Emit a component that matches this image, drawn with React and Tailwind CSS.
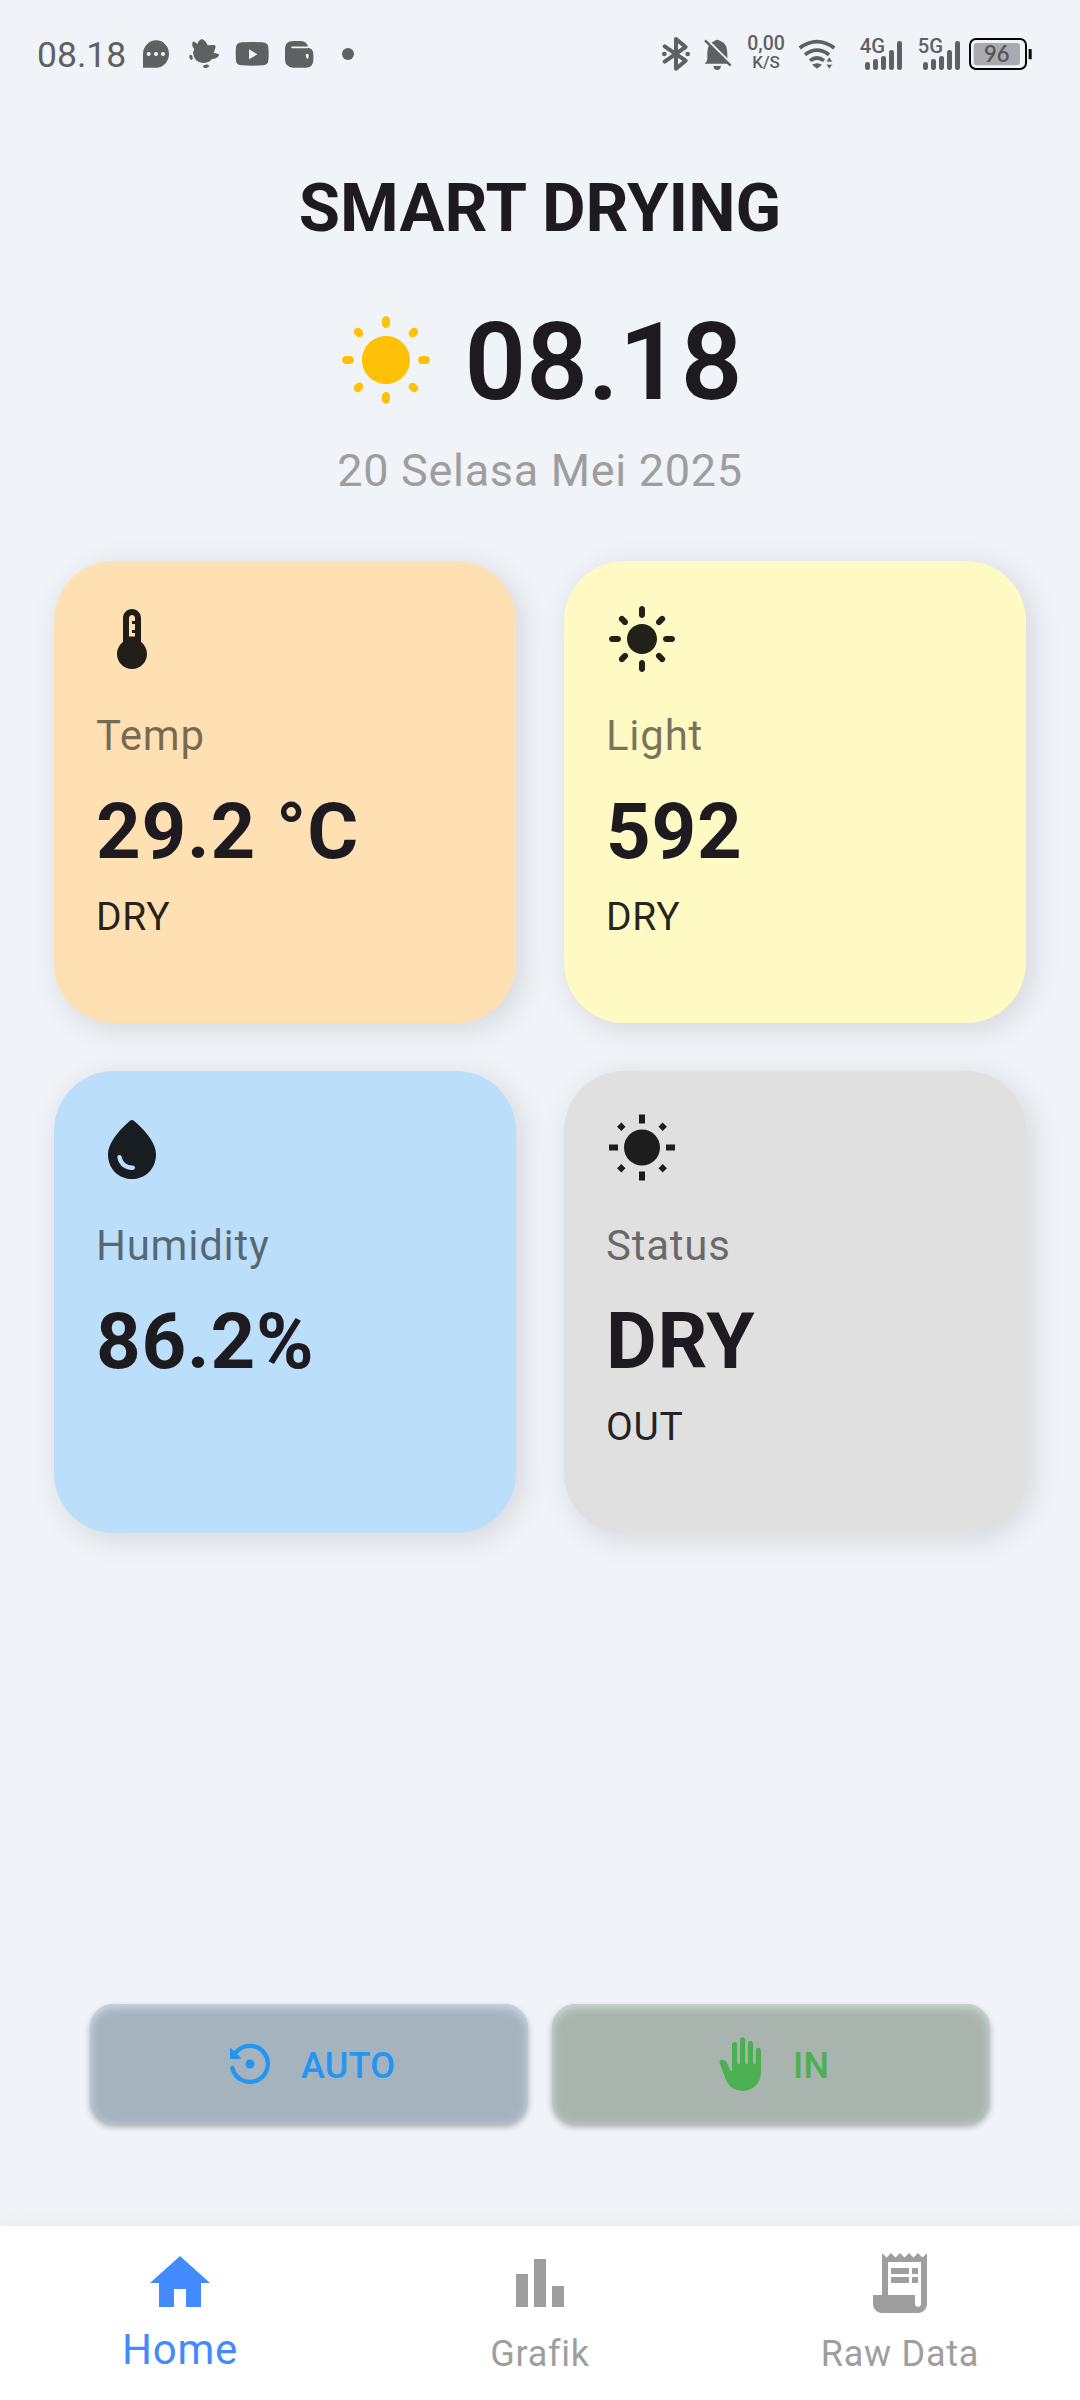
import React from "react";
import {
  MdBarChart,
  MdHome,
  MdLightMode,
} from "react-icons/md";

/* ---------- status bar ---------- */

function Glyph({ x, w, className = "", children }) {
  return (
    <svg
      viewBox={`${x} 0 ${w} 210`}
      width={w / 3}
      height="70"
      className={`shrink-0 ${className}`}
      fill="#5f6062"
    >
      {children}
    </svg>
  );
}

function Signal({ label }) {
  return (
    <Glyph x={654} w={138}>
      <text x="659" y="100" fontFamily="Roboto" fontWeight="500" fontSize="62" textLength="76" lengthAdjust="spacingAndGlyphs">
        {label}
      </text>
      <rect x="675" y="126" width="15" height="24" rx="7" />
      <rect x="699" y="117" width="15" height="33" rx="7" />
      <rect x="723" y="108" width="15" height="42" rx="7" />
      <rect x="747" y="90" width="15" height="60" rx="7" />
      <rect x="771" y="63" width="15" height="87" rx="7" />
    </Glyph>
  );
}

function StatusBar() {
  return (
    <div className="mt-5 flex h-[70px] w-[1060px] shrink-0 items-start pl-9 text-[#5f6062]">
      <span className="mt-[14px] w-[100px] pl-px text-[35.5px] leading-[43px]">08.18</span>
      {/* chat bubble */}
      <Glyph x={408} w={120}>
        <path d="M429 143V101a39 41 0 1 1 39 42Z" />
        <circle cx="446" cy="102" r="6" fill="#f0f4f8" />
        <circle cx="468" cy="102" r="6" fill="#f0f4f8" />
        <circle cx="489" cy="102" r="6" fill="#f0f4f8" />
      </Glyph>
      {/* bird */}
      <Glyph x={528} w={150}>
        <path d="M577 70q0-7 6-5q7 3 9 8q3-12 14-16q12 5 17 19l18-1q8 1 5 10l-5 13l14 4q4 2 1 6q-7 9-20 9q-9 12-27 12q-27-2-30-30q2-9 4-12q-8-7-6-17Z" />
        <ellipse cx="573" cy="112" rx="5" ry="8" transform="rotate(-18 573 112)" />
        <ellipse cx="618" cy="139" rx="9" ry="5" transform="rotate(-10 618 139)" />
      </Glyph>
      {/* video */}
      <Glyph x={678} w={150}>
        <path d="M726 67q31-2 61 0q17 1 18 15q2 20 0 40q-1 13-18 14q-31 2-61 0q-17-1-18-14q-2-20 0-40q1-14 18-15Z" />
        <path d="M747 88v30l25-15Z" fill="#f0f4f8" />
      </Glyph>
      {/* wallet */}
      <Glyph x={828} w={150}>
        <path d="M880 63h22q20 0 22 20q16 3 16 19v18q0 23-24 23h-36q-25 0-25-25V88q0-25 25-25Z" />
        <path d="M876 82h47" stroke="#f0f4f8" strokeWidth="5" strokeLinecap="round" />
        <path d="M917 104q5-5 9 0v5q-1 8-4 8t-4-8Z" fill="#f0f4f8" />
      </Glyph>
      <Glyph x={978} w={120}>
        <circle cx="1044" cy="102" r="18" />
      </Glyph>

      {/* bluetooth */}
      <Glyph x={54} w={108} className="ml-auto">
        <path d="M74 79l63 43l-29 24V57l29 24L74 125" fill="none" stroke="#5f6062" strokeWidth="12" strokeLinejoin="round" strokeLinecap="round" />
        <circle cx="73" cy="102" r="7" />
        <circle cx="143" cy="102" r="7" />
      </Glyph>
      {/* muted bell */}
      <Glyph x={162} w={138}>
        <path d="M194 131q8-6 8-14V98q0-27 20-34q10-9 20 0q20 7 20 34v19q0 8 8 14Z" />
        <path d="M220 138h23q-2 13-12 12q-9 0-11-12Z" />
        <path d="M198 57l78 78" stroke="#f0f4f8" strokeWidth="9" />
        <path d="M195 61l77 76" stroke="#5f6062" strokeWidth="7" />
      </Glyph>
      <div className="mt-[14px] flex w-[52px] flex-col items-center font-medium">
        <span className="text-[19.5px] leading-[19px]">0,00</span>
        <span className="text-[17px] leading-[19px]">K/S</span>
      </div>
      {/* wifi */}
      <Glyph x={456} w={198}>
        <g fill="none" stroke="#5f6062" strokeWidth="11">
          <path d="M479 84q52-38 104 0" />
          <path d="M495 104q36-27 72 0" />
          <path d="M510 122q21-16 42 0" />
        </g>
        <path d="M516 134q15-9 30 0l-15 12Z" />
        <path d="M568 110l10 16h-20ZM568 148l10-15h-20Z" stroke="#f0f4f8" strokeWidth="2" />
      </Glyph>
      <Signal label="4G" />
      <Glyph x={792} w={36} />
      <Signal label="5G" />
      {/* battery */}
      <Glyph x={966} w={294}>
        <rect x="990" y="57" width="168" height="90" rx="18" fill="none" stroke="#050505" strokeWidth="6" />
        <rect x="1001" y="69" width="139" height="67" rx="9" fill="#a9abae" />
        <rect x="1166" y="87" width="9" height="31" rx="2" fill="#050505" />
        <text x="1070" y="126" textAnchor="middle" fontFamily="Lato" fontWeight="600" fontSize="66" fill="#55565a">
          96
        </text>
      </Glyph>
    </div>
  );
}

/* ---------- icons ---------- */

function SunRounded({ className }) {
  return (
    <svg viewBox="0 0 24 24" className={className} fill="currentColor">
      <path d="M6.05 4.14l-.39-.39c-.39-.39-1.02-.38-1.4 0l-.01.01c-.39.39-.39 1.02 0 1.4l.38.39c.39.39 1.01.39 1.4 0l.01-.01c.39-.38.39-1.02.01-1.4zM3.01 10.5H1.99c-.55 0-.99.44-.99.99v.01c0 .55.44.99.99.99H3c.56.01 1-.43 1-.98v-.01c0-.56-.44-1-.99-1zm9-9.95H12c-.56 0-1 .44-1 .99v.96c0 .55.44.99.99.99H12c.56.01 1-.43 1-.98v-.97c0-.55-.44-.99-.99-.99zm7.74 3.21c-.39-.39-1.02-.39-1.41-.01l-.39.39c-.39.39-.39 1.02 0 1.4l.01.01c.39.39 1.02.39 1.4 0l.39-.39c.39-.39.39-1.01 0-1.4zm-1.81 15.1l.39.39c.39.39 1.02.39 1.41 0 .39-.39.39-1.02 0-1.4l-.39-.39c-.39-.38-1.02-.38-1.4 0-.4.4-.4 1.02-.01 1.4zM20 11.49v.01c0 .55.44.99.99.99H22c.55 0 .99-.44.99-.99v-.01c0-.55-.44-.99-.99-.99h-1.01c-.55 0-.99.44-.99.99zM12 5.5c-3.31 0-6 2.69-6 6s2.69 6 6 6 6-2.69 6-6-2.69-6-6-6zm-.01 16.95H12c.55 0 .99-.44.99-.99v-.96c0-.55-.44-.99-.99-.99h-.01c-.55 0-.99.44-.99.99v.96c0 .55.44.99.99.99zm-7.74-3.21c.39.39 1.02.39 1.41 0l.39-.39c.39-.39.38-1.02 0-1.4l-.01-.01c-.39-.39-1.02-.39-1.41 0l-.39.39c-.38.4-.38 1.02.01 1.41z" />
    </svg>
  );
}

function SunSharp({ className }) {
  return (
    <svg viewBox="0 0 24 24" className={className} fill="currentColor">
      <circle cx="12" cy="11.5" r="6" />
      <g stroke="currentColor" strokeWidth="2">
        <path d="M12 .5v3M12 19.5v3M1 11.5h3M20 11.5h3M4.4 3.9l1.4 1.4M19.6 3.9l-1.4 1.4M4.4 19.1l1.4-1.4M19.6 19.1l-1.4-1.4" />
      </g>
    </svg>
  );
}

function Thermometer({ className }) {
  return (
    <svg viewBox="0 0 24 24" className={className} fill="currentColor">
      <path d="M15 13V5c0-1.66-1.34-3-3-3S9 3.34 9 5v8c-1.21.91-2 2.37-2 4 0 2.76 2.24 5 5 5s5-2.24 5-5c0-1.63-.79-3.09-2-4zm-4-8c0-.55.45-1 1-1s1 .45 1 1v1h-1v1h1v2h-1v1h1v1.2h-2V5z" />
    </svg>
  );
}

function Drop({ className }) {
  return (
    <svg viewBox="0 0 24 24" className={className} fill="currentColor" fillRule="evenodd">
      <path d="M12.66 2.58c-.38-.33-.95-.33-1.33 0C6.45 6.88 4 10.62 4 13.8c0 4.98 3.8 8.2 8 8.2s8-3.22 8-8.2c0-3.18-2.45-6.92-7.34-11.22zM7.83 14c.37 0 .67.26.74.62.41 2.22 2.28 2.98 3.64 2.87.43-.02.79.32.79.75 0 .4-.32.73-.72.75-2.13.13-4.62-1.09-5.19-4.12-.08-.45.28-.87.74-.87z" />
    </svg>
  );
}

function Receipt({ className }) {
  return (
    <svg viewBox="0 0 24 24" className={className} fill="currentColor">
      <path d="M19.5 3.5L18 2l-1.5 1.5L15 2l-1.5 1.5L12 2l-1.5 1.5L9 2 7.5 3.5 6 2v14H3v3c0 1.66 1.34 3 3 3h12c1.66 0 3-1.34 3-3V2l-1.5 1.5zM19 19c0 .55-.45 1-1 1s-1-.45-1-1v-3H8V5h11v14z" />
      <path d="M9 7h6v2H9zM16 7h2v2h-2zM9 10h6v2H9zM16 10h2v2h-2z" />
    </svg>
  );
}

function Restore() {
  return (
    <svg viewBox="471 186 138 132" width="46" height="44" fill="#2196f3" className="shrink-0">
      <path d="M487 264A54 54 0 1 0 499 216" fill="none" stroke="#2196f3" strokeWidth="13" strokeLinecap="round" />
      <path d="M482 206v29h29Z" stroke="#2196f3" strokeWidth="4" strokeLinejoin="round" />
      <circle cx="540" cy="252" r="13.5" />
    </svg>
  );
}

function Hand() {
  return (
    <svg viewBox="567 168 129 168" width="43" height="56" fill="#4caf50" className="shrink-0">
      <path d="M568 246q1-8 10-7q9 1 13 9l9 21q2 4 6 4V193a7.8 7.8 0 0 1 15.5 0v56q0 3 4.2 3t4.2-3V179a7.8 7.8 0 0 1 15.5 0v70q0 3 4.2 3t4.2-3V190a7.8 7.8 0 0 1 15.5 0v59q0 3 4 3t4-3V210a7.8 7.8 0 0 1 15.5 0v68a55 55 0 0 1-55 55q-35 0-50-33Z" />
    </svg>
  );
}

/* ---------- dashboard ---------- */

function Card({ tone, icon: Icon, label, value, note }) {
  return (
    <div
      className={`flex h-[462px] w-[462px] flex-col rounded-[60px] p-[42px] shadow-[6px_6px_30px_rgba(0,0,0,0.12)] ${tone}`}
    >
      <Icon className="h-[72px] w-[72px] text-black/[0.87]" />
      <div className="mt-[31px] text-[42px] leading-[60px] tracking-[0.75px] text-black/[0.54]">{label}</div>
      <div className="mt-[10px] text-[78px] leading-[111px] font-bold tracking-[0.75px] whitespace-pre">{value}</div>
      <div className="mt-[2px] text-[39px] leading-[56px] tracking-[0.75px] text-black/[0.87]">{note}</div>
    </div>
  );
}

function NavItem({ icon: Icon, label, active }) {
  return (
    <div
      className={`flex flex-1 flex-col items-center pt-[21px] tracking-[0.75px] ${active ? "text-[#448aff]" : "text-[#9e9e9e]"}`}
    >
      <Icon className="h-[72px] w-[72px]" />
      <span className={active ? "mt-[6px] text-[42px] leading-[49px]" : "mt-[14px] text-[36px] leading-[42px]"}>
        {label}
      </span>
    </div>
  );
}

export default function App() {
  return (
    <div className="flex h-[2400px] w-[1080px] flex-col overflow-hidden bg-[#f0f4f8] font-['Roboto',sans-serif] text-[#1d1b20]">
      <StatusBar />

      <header className="flex flex-col items-center">
        <h1 className="mt-[78px] text-[67.1px] leading-[80px] font-bold">SMART DRYING</h1>
        <div className="mt-[51px] flex h-[126px] items-center gap-[31px]">
          <SunRounded className="h-24 w-24 text-[#ffc107]" />
          <span className="text-[108px] leading-[126px] font-semibold tracking-[0.1px]">08.18</span>
        </div>
        <p className="mt-[20px] text-[45px] leading-[52px] tracking-[0.7px] text-[#9e9e9e]">20 Selasa Mei 2025</p>
      </header>

      <main className="mt-[64px] grid grid-cols-[462px_462px] gap-12 px-[54px]">
        <Card tone="bg-[#ffe0b2]" icon={Thermometer} label="Temp" value="29.2 °C" note="DRY" />
        <Card tone="bg-[#fff9c4]" icon={MdLightMode} label="Light" value="592" note="DRY" />
        <Card tone="bg-[#bbdefb]" icon={Drop} label="Humidity" value="86.2%" note="" />
        <Card tone="bg-[#e0e0e0]" icon={SunSharp} label="Status" value="DRY" note="OUT" />
      </main>

      <div className="mt-auto mb-[102px] flex shrink-0 gap-6 px-[90px] text-[36px] font-medium">
        <button className="flex h-[120px] w-[438px] items-center rounded-[24px] bg-[#a5b3be] pl-[137px] text-[#2196f3] shadow-[0_3px_6px_rgba(0,0,0,0.3),inset_0_3px_8px_1px_#c8d8e5]">
          <Restore />
          <span className="ml-[28px] pt-1 tracking-[0.2px]">AUTO</span>
        </button>
        <button className="flex h-[120px] w-[438px] items-center rounded-[24px] bg-[#aab4af] pl-[167px] text-[#4caf50] shadow-[0_3px_6px_rgba(0,0,0,0.3),inset_0_3px_8px_1px_#c9d9d1]">
          <Hand />
          <span className="ml-[31px] pt-1 tracking-[0.2px]">IN</span>
        </button>
      </div>

      <nav className="flex h-[174px] shrink-0 bg-white shadow-[0_0_24px_rgba(0,0,0,0.04)]">
        <NavItem icon={MdHome} label="Home" active />
        <NavItem icon={MdBarChart} label="Grafik" />
        <NavItem icon={Receipt} label="Raw Data" />
      </nav>
    </div>
  );
}
